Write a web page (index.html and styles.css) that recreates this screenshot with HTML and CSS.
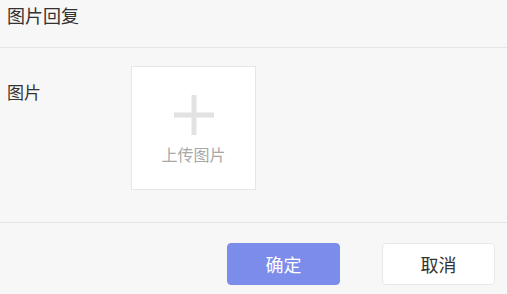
FILE: index.html
```html
<!DOCTYPE html>
<html lang="zh-CN">
<head>
<meta charset="utf-8">
<link rel="stylesheet" href="styles.css">
</head>
<body>
<div class="dialog">
  <div class="header">图片回复</div>
  <div class="body">
    <div class="row">
      <div class="label">图片</div>
      <div class="upload">
        <svg class="plus" width="40" height="40" viewBox="0 0 40 40">
          <rect x="0" y="17.5" width="40" height="5" fill="#e2e2e2"/>
          <rect x="17.5" y="0" width="5" height="40" fill="#e2e2e2"/>
        </svg>
        <div class="upload-text">上传图片</div>
      </div>
    </div>
  </div>
  <div class="footer">
    <button class="btn btn-primary">确定</button>
    <button class="btn btn-default">取消</button>
  </div>
</div>
</body>
</html>
```
FILE: styles.css
```css
html, body {
  margin: 0;
  padding: 0;
  background: #f7f7f7;
  font-family: "Noto Sans CJK SC", "Noto Sans", sans-serif;
  color: #333;
}
.dialog {
  width: 507px;
  height: 294px;
  overflow: hidden;
}
.header {
  height: 48px;
  box-sizing: border-box;
  padding: 3px 0 0 7px;
  font-size: 18px;
  line-height: 24px;
  border-bottom: 1px solid #e5e5e5;
}
.body {
  padding: 18px 0 32px 7px;
  border-bottom: 1px solid #e5e5e5;
}
.row {
  display: flex;
  align-items: flex-start;
}
.label {
  width: 124px;
  font-size: 17px;
  line-height: 24px;
  padding-top: 14px;
}
.upload {
  width: 125px;
  height: 124px;
  box-sizing: border-box;
  background: #fff;
  border: 1px solid #e6e6e6;
  display: flex;
  flex-direction: column;
  align-items: center;
  padding-top: 28px;
}
.plus {
  display: block;
}
.upload-text {
  margin-top: 8px;
  font-size: 16px;
  line-height: 22px;
  color: #a8a8a8;
}
.footer {
  display: flex;
  justify-content: flex-end;
  gap: 42px;
  padding: 20px 12px 0 0;
}
.btn {
  width: 113px;
  height: 42px;
  border-radius: 4px;
  font-family: inherit;
  font-size: 18px;
  padding: 0;
  cursor: pointer;
}
.btn-primary {
  background: #7c8cea;
  border: 1px solid #7c8cea;
  color: #fff;
}
.btn-default {
  background: #fff;
  border: 1px solid #e8e8e8;
  color: #333;
}
```
